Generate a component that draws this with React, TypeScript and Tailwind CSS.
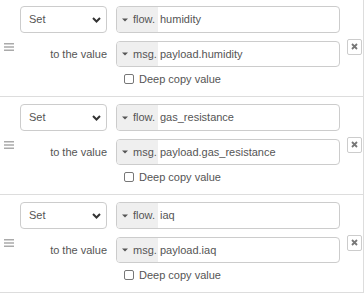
import React from "react";

const rows = [
  { target: "humidity", value: "payload.humidity" },
  { target: "gas_resistance", value: "payload.gas_resistance" },
  { target: "iaq", value: "payload.iaq" },
];

function Caret() {
  return (
    <svg width="6" height="4" viewBox="0 0 6 4" className="shrink-0">
      <path d="M0 0.5 L6 0.5 L3 3.5 Z" fill="#555" />
    </svg>
  );
}

function TypedInput({ type, value, h }: { type: string; value: string; h: string }) {
  return (
    <div className={`flex ${h} w-[224px] items-stretch overflow-hidden rounded-[4px] border border-[#ccc] bg-white`}>
      <div className="flex w-[41px] items-center gap-[5px] bg-[#efefef] pl-[5px]">
        <Caret />
        <span className="text-[#555]">{type}</span>
      </div>
      <div className="flex items-center pl-[2px] text-[#555]">{value}</div>
    </div>
  );
}

function Item({ target, value, first }: { target: string; value: string; first: boolean }) {
  return (
    <div
      className={`relative flex items-center border-b border-[#ddd] ${first ? "pt-[6px]" : "pt-[7px]"} pb-[9px]`}
    >
      <div className="flex w-[20px] shrink-0 justify-start pl-[4px]">
        <svg width="10" height="8" viewBox="0 0 10 8">
          <rect x="0" y="0" width="10" height="1.5" fill="#aaa" />
          <rect x="0" y="3.25" width="10" height="1.5" fill="#aaa" />
          <rect x="0" y="6.5" width="10" height="1.5" fill="#aaa" />
        </svg>
      </div>
      <div className="flex flex-col">
        <div className="flex items-center gap-[9px]">
          <div className="flex h-[27px] w-[87px] items-center justify-between rounded-[4px] border border-[#ccc] bg-white pl-[8px] pr-[5px] text-[#555]">
            <span>Set</span>
            <svg width="9" height="6" viewBox="0 0 9 6">
              <path d="M1 1 L4.5 4.5 L8 1" fill="none" stroke="#333" strokeWidth="2" />
            </svg>
          </div>
          <TypedInput type="flow." value={target} h="h-[27px]" />
        </div>
        <div className="mt-[8px] flex items-center gap-[9px]">
          <div className="w-[87px] text-right text-[#555]">to the value</div>
          <TypedInput type="msg." value={value} h="h-[26px]" />
        </div>
        <div className="mt-[4px] flex h-[16px] items-center pl-[104px]">
          <div className="h-[10px] w-[10px] rounded-[2px] border border-[#777] bg-white" />
          <span className="ml-[5px] text-[#555]">Deep copy value</span>
        </div>
      </div>
      <div className="ml-[7px] flex h-[16px] w-[15px] items-center justify-center rounded-[2px] border border-[#ccc] bg-white">
        <svg width="7" height="7" viewBox="0 0 7 7">
          <path d="M1 1 L6 6 M6 1 L1 6" stroke="#777" strokeWidth="1.8" />
        </svg>
      </div>
    </div>
  );
}

export default function App() {
  return (
    <div
      className="h-[293px] w-[364px] overflow-hidden bg-white text-[11px] leading-none"
      style={{ fontFamily: '"Liberation Sans", Arial, sans-serif' }}
    >
      <div className="w-[364px] border-r border-[#ddd]">
        {rows.map((r, i) => (
          <Item key={i} target={r.target} value={r.value} first={i === 0} />
        ))}
      </div>
    </div>
  );
}
